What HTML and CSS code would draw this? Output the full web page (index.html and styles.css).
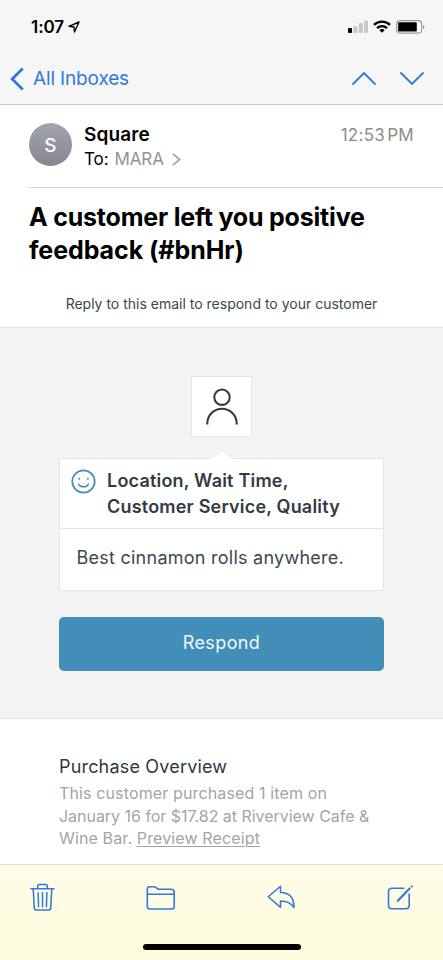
FILE: index.html
```html
<!DOCTYPE html>
<html lang="en">
<head>
<meta charset="utf-8">
<meta name="viewport" content="width=device-width, initial-scale=1">
<title>Mail</title>
<link rel="stylesheet" href="styles.css">
</head>
<body>
<div class="phone">
  <header class="top">
    <div class="status">
      <div class="clock"><span class="time">1:07</span>
        <svg width="12" height="12" viewBox="0 0 12 12" fill="none" stroke="#000" stroke-width="1.4" stroke-linejoin="round"><path d="M11 1 1 5.3l5 .7.5 5z"/></svg>
      </div>
      <div class="signals">
        <svg width="20" height="13" viewBox="0 0 20 13"><rect y="8" width="4" height="5" rx="1"/><g fill="#c8c8ca"><rect x="5.4" y="6" width="4" height="7" rx="1"/><rect x="10.8" y="3" width="4" height="10" rx="1"/><rect x="16" y="0.5" width="4" height="12.5" rx="1"/></g></svg>
        <svg width="18" height="13" viewBox="0 0 18 13" fill="none" stroke="#000" stroke-width="2.3"><path d="M1 4.9a11.5 11.5 0 0 1 16 0M4 8.1a7.2 7.2 0 0 1 10 0"/><path d="M9 12.8 6.3 10.3a4 4 0 0 1 5.4 0z" fill="#000" stroke="none"/></svg>
        <svg width="29" height="14" viewBox="0 0 29 14"><rect x=".7" y=".7" width="25" height="12.4" rx="3.5" fill="#fff" stroke="#98989a" stroke-width="1.2"/><rect x="2.2" y="2.2" width="18.6" height="9.4" rx="1.2"/><path d="M27 5v4q1.4-.6 1.4-2T27 5z" fill="#98989a"/></svg>
      </div>
    </div>
    <nav class="nav">
      <a class="back"><svg width="14" height="24" viewBox="0 0 14 24" fill="none" stroke="#2f7bdc" stroke-width="2.8"><path d="M12.7 1.5 2.2 12l10.5 10.5"/></svg><span class="inboxes">All Inboxes</span></a>
      <div class="arrows">
        <svg width="26" height="15" viewBox="0 0 26 15"><path d="M1.5 13.5 13 2l11.5 11.5"/></svg>
        <svg width="26" height="15" viewBox="0 0 26 15"><path d="M1.5 1.5 13 13 24.5 1.5"/></svg>
      </div>
    </nav>
  </header>

  <section class="message-head">
    <div class="avatar">S</div>
    <div class="people">
      <div class="sender"><span>Square</span></div>
      <div class="to"><span class="label">To:</span><span class="name">MARA</span><svg width="9" height="13" viewBox="0 0 9 13" fill="none" stroke="#929295" stroke-width="1.5"><path d="m1 1 6.6 5.5L1 12"/></svg></div>
    </div>
    <div class="sent">12:53<span class="pm">PM</span></div>
  </section>

  <h1 class="subject"><span class="s1">A customer left you positive</span><br><span class="s2">feedback (#bnHr)</span></h1>
  <p class="hint"><span>Reply to this email to respond to your customer</span></p>

  <main class="feedback">
    <div class="portrait"><svg width="34" height="38" viewBox="0 0 34 38" fill="none" stroke="#343a44" stroke-width="2.1"><circle cx="17" cy="9.2" r="7.7"/><path d="M2.3 36.5v-1a14.7 14.7 0 0 1 29.4 0v1"/></svg></div>
    <div class="card">
      <svg class="pointer" width="22" height="10" viewBox="0 0 22 10"><path d="M0 10 11 1l11 9z" fill="#fff"/><path d="M1 9.2 11 1l10 8.2" fill="none" stroke="#e6e7e8"/></svg>
      <div class="topics">
        <svg width="25" height="25" viewBox="0 0 25 25" fill="none" stroke="#438eb9" stroke-width="1.7"><circle cx="12.5" cy="12.5" r="11.2"/><path d="M7.3 14.6q1.4 3.2 5.2 3.2t5.2-3.2" stroke-width="1.4"/><g fill="#438eb9" stroke="none"><circle cx="8.2" cy="9.8" r="1"/><circle cx="16.8" cy="9.8" r="1"/></g></svg>
        <div class="topic-list"><span class="t1">Location, Wait Time,</span><br><span class="t2">Customer Service, Quality</span></div>
      </div>
      <p class="comment"><span>Best cinnamon rolls anywhere.</span></p>
    </div>
    <a class="respond"><span>Respond</span></a>
  </main>

  <section class="purchase">
    <h2><span>Purchase Overview</span></h2>
    <p><span class="p1">This customer purchased 1 item on</span><br><span class="p2">January 16 for $17.82 at Riverview Cafe &amp;</span><br><span class="p3">Wine Bar. <a>Preview Receipt</a></span></p>
  </section>

  <footer class="toolbar">
    <div class="tools">
      <svg width="25" height="29" viewBox="0 0 26 30"><path d="M1 6h24M3.3 6l1.2 20q.2 2 2.2 2h12.6q2 0 2.2-2L22.7 6M8 6V3.3q0-1.8 1.8-1.8h6.4q1.8 0 1.8 1.8V6M8.5 10l.4 14.5M13 10v14.5M17.5 10l-.4 14.5"/></svg>
      <svg width="30" height="26" viewBox="0 0 30 26"><path d="M1.3 21.5V4.2q0-2.5 2.5-2.5h4q1.5 0 2.5 1l1 .9q.8.7 2 .7h11.9q3 0 3 3v14q0 2.7-2.7 2.7H4Q1.3 24 1.3 21.5zM1.3 9.2h26.9"/></svg>
      <svg width="29" height="25" viewBox="0 0 30 26"><path d="M1.3 12.2 14 1.3v6.4c8.4 0 14 4.3 14 15.7-3.3-5-7-6.7-14-6.7v6.5z"/></svg>
      <svg width="26" height="27" viewBox="0 0 26 27"><path d="M16.8 4.3H5q-3.5 0-3.5 3.5v13.5q0 3.5 3.5 3.5h13.7q3.5 0 3.5-3.5V10"/><path d="M10.8 16.8 22.6 4.6" stroke-width="2.2"/><path d="m24.6 2.6.2-.2" stroke-width="2"/></svg>
    </div>
    <div class="home"></div>
  </footer>
</div>
</body>
</html>
```
FILE: styles.css
```css
* { box-sizing: border-box; }
body { margin: 0; font-family: Inter, "Liberation Sans", sans-serif; color: #000; background: #fff; }
h1, h2, p { margin: 0; }
svg { display: block; flex: none; }
span { white-space: nowrap; }
.phone { width: 443px; height: 960px; display: flex; flex-direction: column; overflow: hidden; }

.top { height: 105px; background: #f6f6f6; border-bottom: 1px solid #c8c8c8; flex: none; }
.status { height: 53px; display: flex; justify-content: space-between; padding: 17px 18px 0 31px; }
.clock { display: flex; gap: 4px; height: 20px; align-items: center; }
.time { font-size: 17px; line-height: 20px; font-weight: 600; letter-spacing: -.05px; }
.signals { display: flex; gap: 5px; height: 19px; align-items: center; }
.nav { height: 51px; display: flex; justify-content: space-between; align-items: center; padding: 0 18px 0 10px; }
.back { display: flex; align-items: center; gap: 9px; color: #3478dc; font-size: 19px; letter-spacing: -.15px; }
.arrows { display: flex; gap: 22px; }
.arrows svg { fill: none; stroke: #2f78db; stroke-width: 1.8; }

.message-head { height: 83px; margin-left: 29px; padding: 18px 29px 0 0; display: flex; border-bottom: 1px solid #d7d7d9; flex: none; }
.avatar { width: 43px; height: 43px; border-radius: 50%; background: linear-gradient(#a2a4b0, #85868f); color: #fff; font-size: 19px; line-height: 45px; font-weight: 500; text-align: center; }
.people { margin-left: 12px; padding-top: 1px; flex: 1; }
.sender { font-size: 19px; line-height: 22px; font-weight: 600; letter-spacing: .1px; }
.to { display: flex; align-items: center; font-size: 17px; line-height: 26px; letter-spacing: -.1px; }
.name { color: #929295; margin: 0 8px 0 6px; }
.sent { padding-top: 1px; font-size: 17px; line-height: 23px; letter-spacing: .3px; color: #8c8c90; }
.pm { margin-left: 2px; }

.subject { margin: 13px 0 0 29px; font-size: 25px; line-height: 33px; font-weight: 700; letter-spacing: -.2px; }
.s2 { letter-spacing: -.07px; }
.hint { margin-top: 27px; text-align: center; font-size: 14px; line-height: 20px; color: #3d4651; }

.feedback { margin-top: 13px; height: 392px; flex: none; background: #f3f3f3; border-top: 1px solid #e6e7e8; border-bottom: 1px solid #e2e3e4; padding: 48px 59px 0; }
.portrait { width: 61px; height: 61px; margin: 0 auto 21px; padding-top: 1px; background: #fff; border: 1px solid #e4e5e6; display: flex; justify-content: center; align-items: center; }
.card { position: relative; height: 133px; background: #fff; border: 1px solid #e4e5e6; border-radius: 2px; }
.pointer { position: absolute; left: 151px; top: -10px; }
.topics { display: flex; gap: 11px; height: 70px; padding: 9px 0 0 11px; border-bottom: 1px solid #e4e5e6; }
.topics > svg { margin-top: 1px; }
.topic-list { font-size: 18px; line-height: 26px; font-weight: 600; letter-spacing: .2px; color: #343a44; }
.comment { padding: 16px 0 0 16.5px; font-size: 18px; line-height: 26px; letter-spacing: .25px; color: #3d4651; }
.respond { display: flex; justify-content: center; align-items: center; height: 54px; margin-top: 26px; padding-bottom: 3px; border-radius: 5px; background: #438eb9; color: #ecfaff; font-size: 18px; letter-spacing: .4px; }

.purchase { height: 145px; padding: 34px 50px 0 59px; flex: none; }
.purchase h2 { font-size: 18px; line-height: 27px; letter-spacing: .18px; font-weight: 400; color: #2f3641; }
.purchase p { margin-top: 2px; font-size: 16px; line-height: 22.5px; letter-spacing: .13px; color: #a2a5a9; }
.purchase .p2 { letter-spacing: -.03px; }
.purchase a { text-decoration: underline; text-underline-offset: 2px; text-decoration-thickness: 1px; }

.toolbar { flex: 1; background: linear-gradient(#fffce8, #fdfcdc); border-top: 1px solid #e4dfd4; padding-top: 17px; }
.tools { display: flex; justify-content: space-between; align-items: center; height: 31px; padding: 0 30px; }
.tools svg { fill: none; stroke: #3478dc; stroke-width: 1.6; stroke-linejoin: round; stroke-linecap: round; }
.home { width: 158px; height: 6px; margin: 31px auto 0; border-radius: 3px; background: #000; }
```
